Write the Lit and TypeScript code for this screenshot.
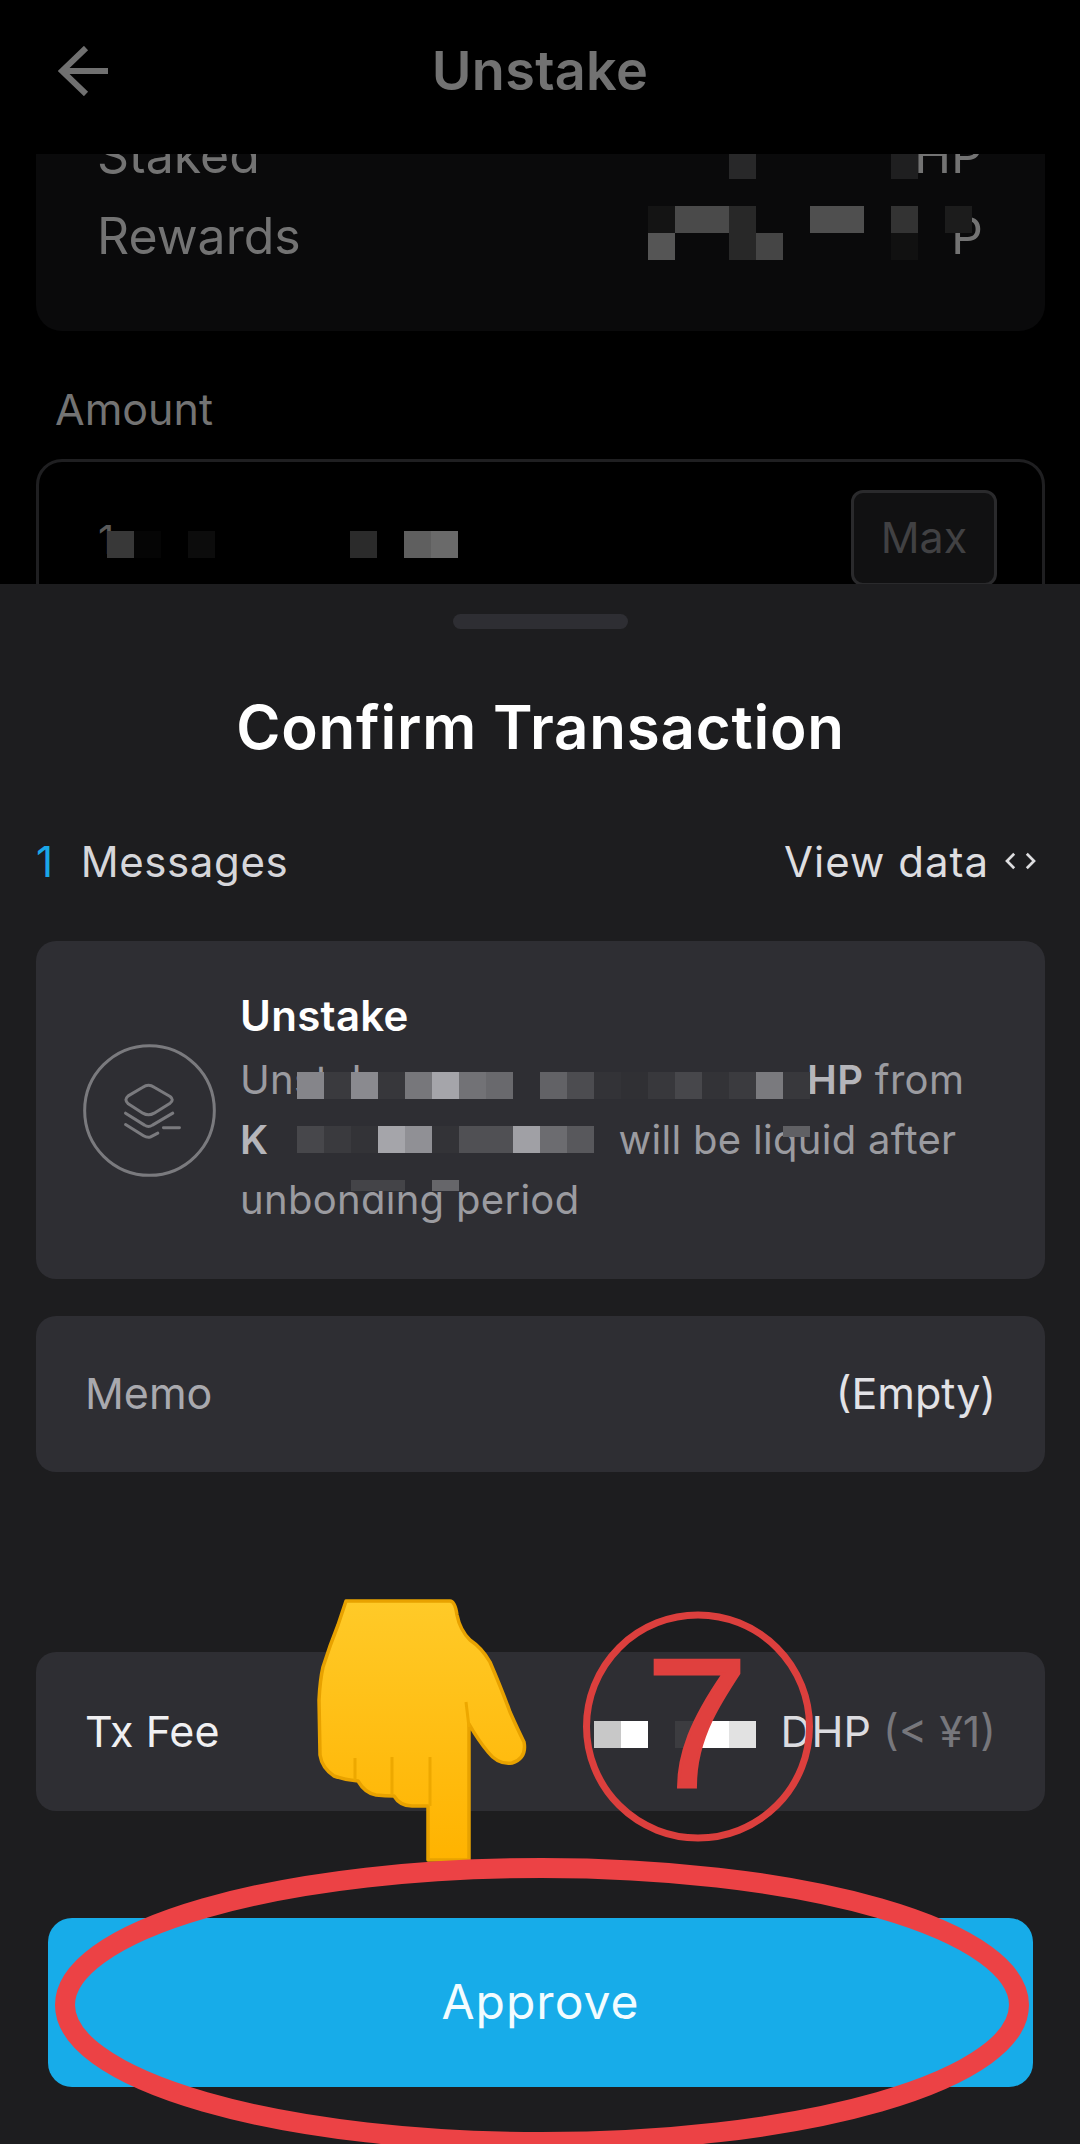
import { LitElement, html, css, svg } from "lit";
import { customElement } from "lit/decorators.js";

type Block = [number, number, string, number?];
const row = (y: number, x0: number, cells: Array<[number, string]>, h = 27): Block[] =>
  cells.map(([i, c]) => [x0 + 27 * i, y, c, h] as Block);

const backBlocks: Block[] = [
  ...row(152, 648, [[3, "#282829"], [9, "#1f1f20"]]),
  ...row(206, 648, [[0, "#141414"], [1, "#4a4a4a"], [2, "#4a4a4a"], [3, "#282828"], [6, "#4f4f4f"], [7, "#4f4f4f"], [9, "#333"], [11, "#1c1c1c"]]),
  ...row(233, 648, [[0, "#555"], [3, "#282828"], [4, "#454545"], [9, "#111"]]),
  ...row(531, 107, [[0, "#383838"], [1, "#050505"], [3, "#0c0c0c"], [9, "#2b2b2b"], [11, "#5f5f5f"], [12, "#6a6a6a"]]),
];
const SHEET_TOP = 584;
const sheetBlocks: Block[] = [
  ...row(1072, 297, [[0, "#85858a"], [1, "#3a3a3e"], [2, "#8a8a8f"], [3, "#37373b"], [4, "#77777b"], [5, "#a5a5aa"], [6, "#727276"], [7, "#69696d"], [8, "#2e2e33"], [9, "#626266"], [10, "#4c4c50"], [11, "#333337"], [12, "#303034"], [13, "#38383c"], [14, "#47474b"], [15, "#333337"], [16, "#3b3b3f"], [17, "#7a7a7e"], [18, "#38383c"]]),
  ...row(1126, 297, [[0, "#47474b"], [1, "#3a3a3e"], [2, "#333337"], [3, "#a5a5aa"], [4, "#909095"], [5, "#333337"], [6, "#505054"], [7, "#505054"], [8, "#a0a0a5"], [9, "#6c6c70"], [10, "#58585c"]]),
  ...row(1126, 783, [[0, "#606064"]], 11),
  ...row(1180, 351, [[0, "#444448"], [1, "#444448"], [3, "#66666a"]], 11),
  ...row(1721, 594, [[0, "#c8c8c8"], [1, "#ffffff"], [3, "#3c3c40"], [4, "#ffffff"], [5, "#e2e2e2"]]),
];

@customElement("app-root")
export class AppRoot extends LitElement {
  static styles = css`
    :host { display: block; width: 1080px; height: 2144px; position: relative; overflow: hidden; background: #000; font-family: Inter, "Liberation Sans", sans-serif; }
    .header { position: relative; z-index: 2; height: 154px; box-sizing: border-box; padding-bottom: 14px; background: #000; display: flex; align-items: center; justify-content: center; color: #727272; font-size: 54px; font-weight: 600; letter-spacing: 0.3px; }
    .back { position: absolute; left: 58px; top: 46px; width: 52px; height: 50px; }
    .back path { fill: none; stroke: #707070; stroke-width: 6; }
    .back-body { position: relative; height: 430px; overflow: hidden; padding: 0 35px 0 36px; color: #737373; }
    .stats { margin-top: -39px; height: 216px; background: #0a0a0b; border-radius: 0 0 26px 26px; padding: 0 62px 0 61px; display: flex; flex-direction: column; font-size: 50px; }
    .stats div { height: 81px; line-height: 81px; display: flex; justify-content: space-between; flex: none; }
    .amount-label { margin: 54px 0 0 19px; font-size: 43px; line-height: 48px; }
    .amount { margin-top: 26px; height: 160px; box-sizing: border-box; border: 3px solid #1f1f21; border-radius: 26px; display: flex; justify-content: space-between; padding: 28px 45px 0 59px; }
    .amount .val { font-size: 40px; line-height: 100px; color: #5a5a5a; }
    .max { width: 146px; height: 96px; box-sizing: border-box; border: 3px solid #2a2a2c; background: #111112; border-radius: 12px; color: #414143; font-size: 43px; display: flex; align-items: center; justify-content: center; padding-bottom: 2px; }
    .blk { position: absolute; width: 27px; z-index: 1; }
    .sheet { position: absolute; left: 0; right: 0; top: 584px; bottom: 0; background: #1d1d1f; padding: 30px 35px 0 36px; display: flex; flex-direction: column; z-index: 3; }
    .handle { align-self: center; width: 175px; height: 15px; flex: none; border-radius: 8px; background: #2e2e33; }
    .title { margin-top: 64px; text-align: center; font-size: 60px; letter-spacing: 0.8px; line-height: 68px; font-weight: 600; color: #fff; }
    .msgs { margin-top: 76px; height: 48px; display: flex; align-items: center; justify-content: space-between; font-size: 42px; letter-spacing: 0.6px; padding-right: 9px; }
    .msgs .l { display: flex; gap: 27px; color: #d6d6da; }
    .msgs .n { color: #1aa7e8; }
    .msgs .r { display: flex; align-items: center; gap: 16px; color: #dedee0; letter-spacing: 1px; }
    .msgs svg { width: 31px; height: 18px; }
    .msgs svg path { fill: none; stroke: #dedee0; stroke-width: 3; }
    .card { background: #2e2e33; border-radius: 20px; flex: none; box-sizing: border-box; }
    .tx { margin-top: 56px; height: 338px; display: flex; align-items: center; padding: 0 0 0 47px; gap: 24px; }
    .tx svg { width: 133px; height: 133px; flex: none; }
    .tx svg * { fill: none; stroke: #7a7a7e; stroke-width: 9; stroke-linecap: round; stroke-linejoin: round; }
    .tx-text { font-size: 40px; letter-spacing: 0.3px; line-height: 60px; color: #9b9ba0; white-space: nowrap; }
    .tx-text .h { color: #fff; font-weight: 600; font-size: 42px; margin-top: -4px; margin-bottom: 4px; }
    .tx-text b { font-weight: 600; color: #b5b5ba; }
    .tx-text .sp1 { display: inline-block; width: 433px; }
    .tx-text .sp2 { display: inline-block; width: 350px; }
    .line { display: flex; align-items: center; justify-content: space-between; padding: 0 49px 2px; font-size: 43px; }
    .memo { margin-top: 37px; height: 156px; color: #a9a9ae; }
    .memo .v { color: #e2e2e6; }
    .fee { margin-top: 180px; height: 159px; color: #f0f0f2; }
    .fee .v { color: #dcdce0; }
    .fee .m { color: #77777c; }
    .btn { margin: 107px 12px 0; height: 169px; box-sizing: border-box; padding-bottom: 2px; background: #17ace9; border-radius: 24px; flex: none; display: flex; align-items: center; justify-content: center; color: #f2fcff; font-size: 48px; letter-spacing: 1px; }
    .marks { position: absolute; left: 0; top: 0; width: 1080px; height: 2144px; z-index: 4; pointer-events: none; }
  `;

  private blocks(list: Block[], offset = 0) {
    return list.map(([x, y, c, h]) => html`<div class="blk" style="left:${x}px;top:${y - offset}px;height:${h}px;background:${c}"></div>`);
  }

  render() {
    return html`
      <div class="header">
        <svg class="back" viewBox="0 0 52 50"><path d="M50 25H4M28 2 4 25 28 48"/></svg>
        Unstake
      </div>
      <div class="back-body">
        <div class="stats">
          <div><span>Staked</span><span>HP</span></div>
          <div><span>Rewards</span><span>P</span></div>
        </div>
        <div class="amount-label">Amount</div>
        <div class="amount"><span class="val">1</span><span class="max">Max</span></div>
      </div>
      ${this.blocks(backBlocks)}
      <div class="sheet">
        <div class="handle"></div>
        <div class="title">Confirm Transaction</div>
        <div class="msgs">
          <div class="l"><span class="n">1</span><span>Messages</span></div>
          <div class="r">View data
            <svg viewBox="0 0 34 20"><path d="M10 2 2 10l8 8M24 2l8 8-8 8"/></svg>
          </div>
        </div>
        <div class="card tx">
          <svg viewBox="70 70 400 400">
            <circle cx="270" cy="270" r="195"/>
            <path d="M250 200Q267 188 284 200L332 228Q345 238 332 248L284 278Q267 288 250 278L206 250Q192 238 206 226Z"/>
            <path d="M198 278 255 314Q267 322 279 314L340 278"/>
            <path d="M198 312 252 346Q262 352 272 350L295 338"/>
            <path d="M312 322H360"/>
          </svg>
          <div class="tx-text">
            <div class="h">Unstake</div>
            <div>Unstak<span class="sp1"></span><b>HP</b> from</div>
            <div><b>K</b><span class="sp2"></span>will be liquid after</div>
            <div>unbonding period</div>
          </div>
        </div>
        <div class="card line memo"><span>Memo</span><span class="v">(Empty)</span></div>
        <div class="card line fee"><span>Tx Fee</span><span><span class="v">DHP</span> <span class="m">(&lt; ¥1)</span></span></div>
        <div class="btn">Approve</div>
        ${this.blocks(sheetBlocks, SHEET_TOP)}
      </div>
      <svg class="marks" viewBox="0 0 1080 2144">
        <defs>
          <linearGradient id="hand" x1="0" y1="0" x2="0" y2="1">
            <stop offset="0" stop-color="#ffca28"/>
            <stop offset="1" stop-color="#ffb300"/>
          </linearGradient>
        </defs>
        ${svg`
          <path d="M346 1601L450 1601Q455 1601 457 1615Q460 1630 470 1640Q482 1648 490 1662Q502 1690 510 1712Q518 1730 524 1742Q527 1758 512 1763Q498 1765 488 1752Q478 1740 469 1724L469 1860L428 1860L428 1806L412 1806Q400 1806 394 1796Q385 1796 376 1795Q365 1793 358 1781Q345 1780 334 1776Q322 1768 320 1755L319 1700Q320 1680 323 1667Q330 1645 338 1625Z" fill="url(#hand)" stroke="#e8a200" stroke-width="3.5" stroke-linejoin="round"/>
          <path d="M355 1758V1780M392 1757V1795M430 1757V1806M466 1702 469 1727" fill="none" stroke="#eda800" stroke-width="3"/>
          <circle cx="698" cy="1726.5" r="111.5" fill="none" stroke="#dc3f3d" stroke-width="7"/>
          <text x="697" y="1787" text-anchor="middle" font-family="Liberation Sans, sans-serif" font-size="184" fill="#e0403e" stroke="#e0403e" stroke-width="3">7</text>
          <ellipse cx="542" cy="2005" rx="477" ry="137" fill="none" stroke="#ec4245" stroke-width="20"/>
        `}
      </svg>
    `;
  }
}
